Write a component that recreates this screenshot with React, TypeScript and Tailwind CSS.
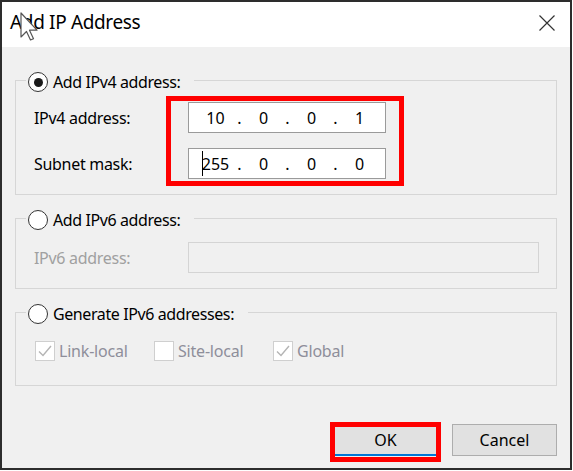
import React from "react";

function Radio({ checked }: { checked?: boolean }) {
  return (
    <span className="w-[20px] h-[20px] rounded-full border-[1.5px] border-[#333] bg-white flex items-center justify-center shrink-0">
      {checked && <span className="w-[9px] h-[9px] rounded-full bg-[#1a1a1a]" />}
    </span>
  );
}

function Legend({ label, checked }: { label: string; checked?: boolean }) {
  // legend box is 16px tall so the border sits 2px above the radio's centre
  return (
    <legend className="ml-0 pl-[2px] pr-[14px] h-[16px]">
      <div className="flex items-start gap-[5px] h-[16px]">
        <Radio checked={checked} />
        <span className="text-[16px] leading-[20px] tracking-[-0.4px] text-black whitespace-nowrap">{label}</span>
      </div>
    </legend>
  );
}

function Octets({ values, caret }: { values: string[]; caret?: boolean }) {
  return (
    <div className="w-[198px] h-[31px] bg-white border border-[#9a9a9a] flex items-center pl-[11px] text-[16px] text-black">
      {values.map((v, i) => (
        <React.Fragment key={i}>
          {i > 0 && <span className="w-[17px] text-center">.</span>}
          <span className="relative w-[31px] text-center">
            {caret && i === 0 && (
              <span className="absolute left-[2px] top-[-1px] w-[1px] h-[25px] bg-black" />
            )}
            {v}
          </span>
        </React.Fragment>
      ))}
    </div>
  );
}

function Check({ label, checked, wide }: { label: string; checked?: boolean; wide?: boolean }) {
  return (
    <div className={`flex items-center gap-[4px] ${wide ? "w-[119px]" : ""}`}>
      <span className="w-[20px] h-[20px] border border-[#cfcfcf] bg-white flex items-center justify-center">
        {checked && (
          <svg width="16" height="16" viewBox="0 0 16 16" fill="none">
            <path d="M2 8.5 L6 12.5 L14 3" stroke="#b4b4b4" strokeWidth="1.4" />
          </svg>
        )}
      </span>
      <span className="text-[16px] tracking-[-0.2px] text-[#8e8e9a]">{label}</span>
    </div>
  );
}

export default function App() {
  return (
    <div className="w-[573px] h-[471px] bg-white font-['Noto_Sans','Segoe_UI',sans-serif]">
      <div className="relative w-[572px] h-[470px] border-2 border-[#2d2d2d] bg-[#f0f0f0] flex flex-col">
        {/* Title bar */}
        <div className="h-[45px] bg-white flex items-center justify-between pl-[8px] pr-[15px] pb-[4px] shrink-0">
          <span className="text-[19px] tracking-[-0.35px] text-black">Add IP Address</span>
          <svg width="16" height="16" viewBox="0 0 16 16" fill="none">
            <path d="M0.5 0.5 L15.5 15.5 M15.5 0.5 L0.5 15.5" stroke="#333" strokeWidth="1.2" />
          </svg>
        </div>

        {/* Body */}
        <div className="flex-1 flex flex-col px-[13px] pt-[25px]">
          {/* IPv4 */}
          <fieldset className="border border-[#d6d6d6] px-[10px] pb-[8px]">
            <Legend label="Add IPv4 address:" checked />
            <div className="flex mt-[8px] pl-[8px]">
              <div className="w-[132px] flex flex-col gap-[15px] pt-[6px] tracking-[-0.3px]">
                <div className="h-[31px] flex items-center text-[16px] text-black">IPv4 address:</div>
                <div className="h-[31px] flex items-center text-[16px] text-black">Subnet mask:</div>
              </div>
              <div className="border-[5px] border-[#ff0000] pl-[17px] pr-[13px] pt-[1px] pb-[2px] flex flex-col gap-[15px]">
                <Octets values={["10", "0", "0", "1"]} />
                <Octets values={["255", "0", "0", "0"]} caret />
              </div>
            </div>
          </fieldset>

          {/* IPv6 */}
          <fieldset className="mt-[15px] border border-[#d6d6d6] px-[10px] pb-[15px]">
            <Legend label="Add IPv6 address:" />
            <div className="flex items-center mt-[16px] pl-[8px]">
              <div className="w-[154px] text-[16px] tracking-[-0.3px] text-[#a0a0a0]">IPv6 address:</div>
              <div className="w-[351px] h-[31px] border border-[#d4d4d4] bg-[#f0f0f0]" />
            </div>
          </fieldset>

          {/* Generate IPv6 */}
          <fieldset className="mt-[15px] border border-[#d6d6d6] px-[10px] pb-[22px]">
            <Legend label="Generate IPv6 addresses:" />
            <div className="flex items-center mt-[19px] pl-[9px]">
              <Check label="Link-local" checked wide />
              <Check label="Site-local" wide />
              <Check label="Global" checked />
            </div>
          </fieldset>

          {/* Buttons */}
          <div className="flex justify-end gap-[14px] mt-[38px]">
            <div className="relative">
              <button className="w-[105px] h-[32px] bg-[#e1e1e1] border border-[#adadad] border-b-2 border-b-[#0078d7] text-[16px] text-black">
                OK
              </button>
              <span className="absolute left-[-3px] top-[-2px] w-[111px] h-[40px] border-[5px] border-[#ff0000] pointer-events-none" />
            </div>
            <button className="w-[105px] h-[32px] bg-[#e1e1e1] border border-[#adadad] text-[16px] text-black">
              Cancel
            </button>
          </div>
        </div>

        {/* Mouse pointer over the title */}
        <svg className="absolute left-[18px] top-[10px]" width="20" height="30" viewBox="0 0 20 30">
          <path
            d="M1 1 L1 25 L6.5 19.5 L10.5 28 L13.5 26.7 L9.5 18.2 L17 18.2 Z"
            fill="#fff"
            stroke="#555"
            strokeWidth="1.2"
            strokeLinejoin="round"
          />
        </svg>
      </div>
    </div>
  );
}
